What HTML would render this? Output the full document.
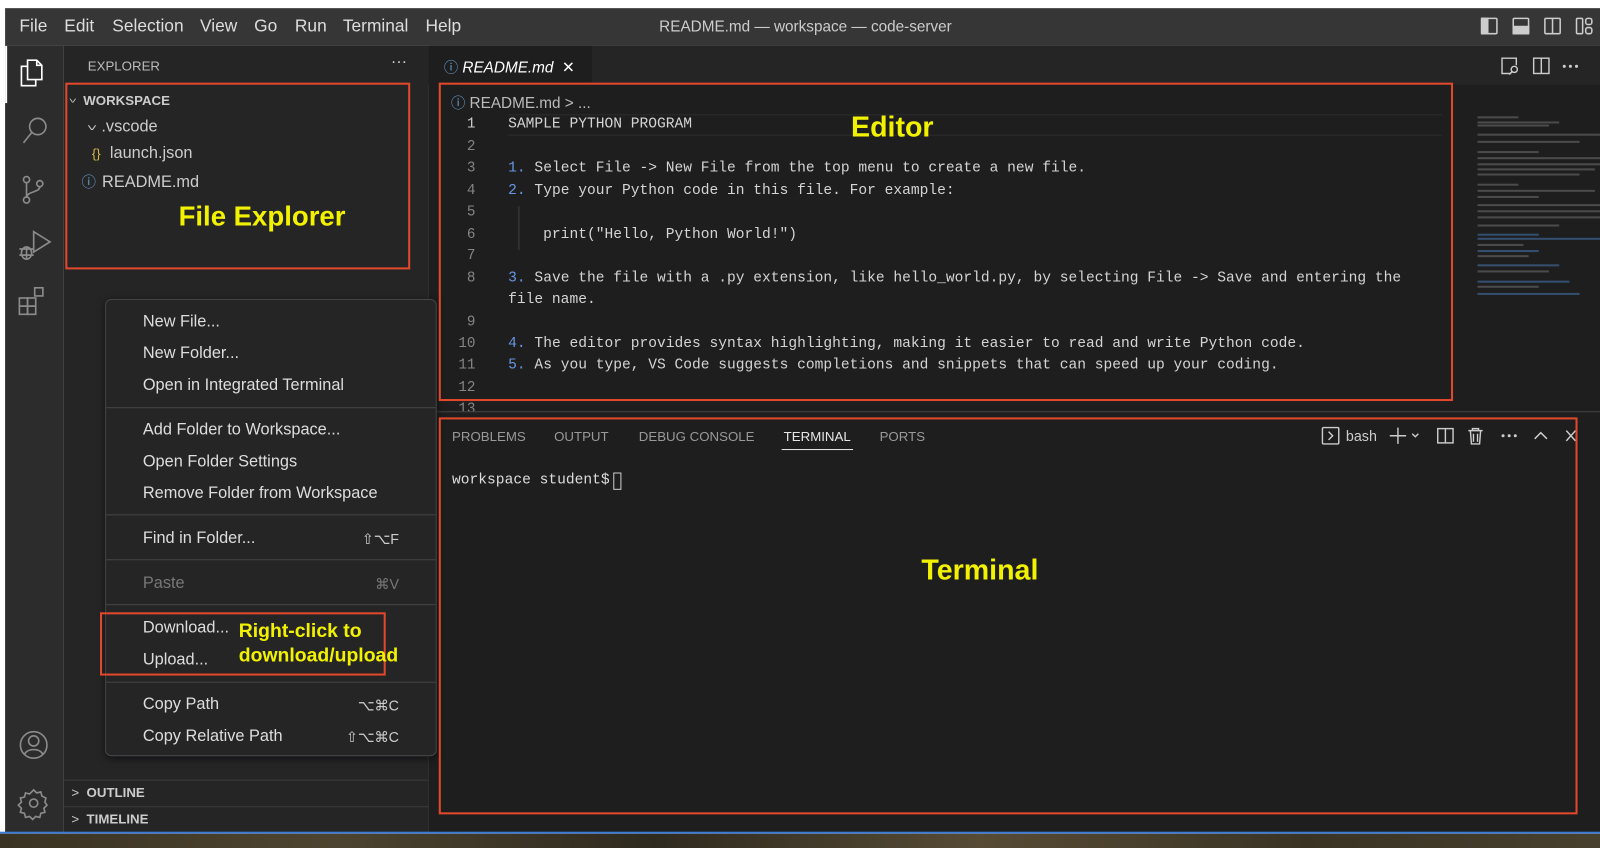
<!DOCTYPE html>
<html><head><meta charset="utf-8"><style>
*{box-sizing:border-box;margin:0;padding:0}
body{width:1600px;height:847px;background:#fff;position:relative;overflow:hidden;font-family:"Liberation Sans",sans-serif;color:#ccc}
#w{position:absolute;left:0;top:0;width:1568px;height:830px;transform:scale(1.0204,1.0205);transform-origin:0 0}
.a{position:absolute}
.mono{font-family:"Liberation Mono",monospace}
.rb{position:absolute;border:2px solid #e2482b}
.y{position:absolute;color:#f2f200;font-weight:bold;font-family:"Liberation Sans",sans-serif}
.mi{position:absolute;left:36px;font-size:16px;color:#ddd}
.sc{position:absolute;right:36px;font-size:14px;color:#ccc}
.sep{position:absolute;left:0;right:0;height:1px;background:#454545}
.ln{position:absolute;width:46px;text-align:right;left:420px;font-size:14px;color:#858585}
.cl{position:absolute;left:498px;font-size:14.3px;color:#d4d4d4;white-space:pre}
.n{color:#6796e6}
.mm{position:absolute;height:2px;background:#777;opacity:.5}
.mn{position:absolute;top:16px;font-size:17px;color:#ddd}
.pt{position:absolute;top:420px;font-size:13px;color:#999}
</style></head><body><div id="w">
<div class="a" style="left:5px;top:8px;width:1595px;height:37px;background:#363636"></div>
<div class="mn" style="left:19px">File</div><div class="mn" style="left:63px">Edit</div><div class="mn" style="left:110px">Selection</div><div class="mn" style="left:196px">View</div><div class="mn" style="left:249px">Go</div><div class="mn" style="left:289px">Run</div><div class="mn" style="left:336px">Terminal</div><div class="mn" style="left:417px">Help</div>
<div class="a" style="left:646px;top:18px;font-size:15px;color:#ccc">README.md — workspace — code-server</div>
<svg class="a" style="left:1450px;top:16px" width="120" height="22" fill="none" stroke="#ccc" stroke-width="1.5">
<rect x="2" y="2" width="15" height="15" rx="1"/><rect x="2" y="2" width="6" height="15" fill="#ccc"/>
<rect x="33" y="2" width="15" height="15" rx="1"/><rect x="33" y="10" width="15" height="7" fill="#ccc"/>
<rect x="64" y="2" width="15" height="15" rx="1"/><line x1="71.5" y1="2" x2="71.5" y2="17"/>
<rect x="95" y="2" width="6" height="15" rx="1"/><rect x="104" y="2" width="6" height="6" rx="2"/><rect x="104" y="11" width="6" height="6" rx="2"/>
</svg>
<div class="a" style="left:5px;top:45px;width:57px;height:771px;background:#2c2c2c"></div>
<div class="a" style="left:5px;top:45px;width:2px;height:56px;background:#fff"></div>
<svg class="a" style="left:15px;top:52px" width="40" height="290" fill="none" stroke="#8b8b8b" stroke-width="1.6">
<g stroke="#fff"><path d="M12 7h9l5 5v14H12z"/><path d="M21 7v5h5"/><path d="M12 13H6v19h14v-6"/></g>
<circle cx="22" cy="72" r="8"/><line x1="16" y1="78" x2="8" y2="88"/>
<circle cx="11" cy="124" r="3"/><circle cx="24" cy="128" r="3"/><circle cx="11" cy="144" r="3"/><path d="M11 127v14M24 131c0 6-13 4-13 11"/>
<path d="M18 175l16 10-16 10z"/><ellipse cx="11" cy="196" rx="5" ry="6"/><path d="M4 192h14M4 198h14M11 190v12"/>
<rect x="4" y="240" width="8" height="8"/><rect x="12" y="240" width="8" height="8"/><rect x="4" y="248" width="8" height="8"/><rect x="12" y="248" width="8" height="8"/><rect x="19" y="230" width="8" height="8"/>
</svg>
<svg class="a" style="left:15px;top:712px" width="40" height="100" fill="none" stroke="#8b8b8b" stroke-width="1.6">
<circle cx="18" cy="18" r="13"/><circle cx="18" cy="14" r="5"/><path d="M9 27c3-6 15-6 18 0"/>
<circle cx="18" cy="75" r="4"/><path d="M18 62l3 3 4-1 1 4 4 2-1 4 2 3-3 3 1 4-4 1-1 4-4-1-3 3-3-3-4 1-1-4-4-1 1-4-3-3 3-3-1-4 4-1 1-4 4 1z"/>
</svg>
<div class="a" style="left:62px;top:45px;width:358px;height:771px;background:#252526"></div>
<div class="a" style="left:86px;top:57px;font-size:13px;color:#bbb">EXPLORER</div>
<div class="a" style="left:383px;top:52px;font-size:16px;color:#ccc">···</div>
<div class="a" style="left:68px;top:91px;font-size:13px;color:#ccc"><span style="display:inline-block;transform:scaleY(.6) rotate(90deg);margin-right:6px">&gt;</span><b>WORKSPACE</b></div>
<div class="a" style="left:84px;top:116px;font-size:16px;color:#ccc"><span style="display:inline-block;transform:scaleY(.6) rotate(90deg);margin-right:6px">&gt;</span>.vscode</div>
<div class="a" style="left:90px;top:142px;font-size:16px;color:#ccc"><span style="color:#d7ba3d;font-size:13px;margin-right:9px">{}</span>launch.json</div>
<div class="a" style="left:80px;top:168px;font-size:16px;color:#ccc"><span style="color:#6aa0d6;font-size:14px;margin-right:6px">ⓘ</span>README.md</div>
<div class="a" style="left:62px;width:358px;top:764px;height:1px;background:#3a3a3a"></div>
<div class="a" style="left:62px;width:358px;top:790px;height:1px;background:#3a3a3a"></div>
<div class="a" style="left:70px;top:769px;font-size:13px;color:#ccc">&gt;&nbsp; <b>OUTLINE</b></div>
<div class="a" style="left:70px;top:795px;font-size:13px;color:#ccc">&gt;&nbsp; <b>TIMELINE</b></div>
<div class="a" style="left:420px;top:45px;width:1180px;height:771px;background:#1e1e1e"></div>
<div class="a" style="left:420px;top:45px;width:1180px;height:38px;background:#252526"></div>
<div class="a" style="left:420px;top:45px;width:160px;height:38px;background:#1e1e1e"></div>
<div class="a" style="left:435px;top:56px;font-size:15px;color:#fff"><span style="color:#6aa0d6;font-size:14px">ⓘ</span> <i>README.md</i> &nbsp;✕</div>
<svg class="a" style="left:1470px;top:55px" width="80" height="20" fill="none" stroke="#ccc" stroke-width="1.4">
<path d="M10 2H2v15h9M10 2h6v7"/><circle cx="14" cy="13" r="3"/><path d="M12 15l-3 3"/>
<rect x="33" y="2" width="15" height="15"/><line x1="40.5" y1="2" x2="40.5" y2="17"/>
<circle cx="63" cy="10" r=".8" fill="#ccc"/><circle cx="69" cy="10" r=".8" fill="#ccc"/><circle cx="75" cy="10" r=".8" fill="#ccc"/>
</svg>
<div class="a" style="left:442px;top:91px;font-size:15px;color:#bbb"><span style="color:#6aa0d6;font-size:14px">ⓘ</span> README.md &gt; ...</div>
<div class="a" style="left:498px;top:112px;width:915px;height:21px;border-top:1px solid #2d2d2d;border-bottom:1px solid #2d2d2d"></div>
<div class="a" style="left:508px;top:202px;width:1px;height:43px;background:#404040"></div>
<div class="mono">
<div class="ln" style="top:114px;color:#ccc">1</div><div class="ln" style="top:136px">2</div><div class="ln" style="top:157px">3</div><div class="ln" style="top:179px">4</div><div class="ln" style="top:200px">5</div><div class="ln" style="top:222px">6</div><div class="ln" style="top:243px">7</div><div class="ln" style="top:265px">8</div><div class="ln" style="top:308px">9</div><div class="ln" style="top:329px">10</div><div class="ln" style="top:350px">11</div><div class="ln" style="top:372px">12</div><div class="ln" style="top:393px;height:10px;overflow:hidden">13</div>
<div class="cl" style="top:114px">SAMPLE PYTHON PROGRAM</div>
<div class="cl" style="top:157px"><span class="n">1.</span> Select File -&gt; New File from the top menu to create a new file.</div>
<div class="cl" style="top:179px"><span class="n">2.</span> Type your Python code in this file. For example:</div>
<div class="cl" style="top:222px">    print("Hello, Python World!")</div>
<div class="cl" style="top:265px"><span class="n">3.</span> Save the file with a .py extension, like hello_world.py, by selecting File -&gt; Save and entering the</div>
<div class="cl" style="top:286px">file name.</div>
<div class="cl" style="top:329px"><span class="n">4.</span> The editor provides syntax highlighting, making it easier to read and write Python code.</div>
<div class="cl" style="top:350px"><span class="n">5.</span> As you type, VS Code suggests completions and snippets that can speed up your coding.</div>
</div>
<div class="mm" style="left:1448px;top:114px;width:40px"></div>
<div class="mm" style="left:1448px;top:119px;width:80px"></div>
<div class="mm" style="left:1448px;top:122px;width:70px"></div>
<div class="mm" style="left:1448px;top:131px;width:120px"></div>
<div class="mm" style="left:1448px;top:138px;width:100px"></div>
<div class="mm" style="left:1448px;top:148px;width:60px"></div>
<div class="mm" style="left:1448px;top:154px;width:125px"></div>
<div class="mm" style="left:1448px;top:160px;width:125px"></div>
<div class="mm" style="left:1448px;top:165px;width:115px"></div>
<div class="mm" style="left:1448px;top:170px;width:100px"></div>
<div class="mm" style="left:1448px;top:180px;width:40px"></div>
<div class="mm" style="left:1448px;top:186px;width:115px"></div>
<div class="mm" style="left:1448px;top:192px;width:60px"></div>
<div class="mm" style="left:1448px;top:200px;width:125px"></div>
<div class="mm" style="left:1448px;top:206px;width:125px"></div>
<div class="mm" style="left:1448px;top:212px;width:125px"></div>
<div class="mm" style="left:1448px;top:220px;width:80px"></div>
<div class="mm" style="left:1448px;top:229px;width:60px;background:#4a7fc0"></div>
<div class="mm" style="left:1448px;top:233px;width:125px;background:#4a7fc0"></div>
<div class="mm" style="left:1448px;top:239px;width:45px"></div>
<div class="mm" style="left:1448px;top:245px;width:60px;background:#4a7fc0"></div>
<div class="mm" style="left:1448px;top:250px;width:50px"></div>
<div class="mm" style="left:1448px;top:259px;width:80px;background:#4a7fc0"></div>
<div class="mm" style="left:1448px;top:265px;width:70px"></div>
<div class="mm" style="left:1448px;top:275px;width:90px;background:#4a7fc0"></div>
<div class="mm" style="left:1448px;top:280px;width:60px"></div>
<div class="mm" style="left:1448px;top:287px;width:100px;background:#4a7fc0"></div>
<div class="a" style="left:1583px;top:114px;width:1px;height:300px;background:#333"></div>
<div class="a" style="left:420px;top:403px;width:1180px;height:1px;background:#444"></div>
<div class="pt" style="left:443px">PROBLEMS</div>
<div class="pt" style="left:543px">OUTPUT</div>
<div class="pt" style="left:626px">DEBUG CONSOLE</div>
<div class="pt" style="left:768px;color:#e7e7e7">TERMINAL</div>
<div class="a" style="left:766px;top:440px;width:70px;height:1px;background:#e7e7e7"></div>
<div class="pt" style="left:862px">PORTS</div>
<svg class="a" style="left:1295px;top:417px" width="260" height="20" fill="none" stroke="#ccc" stroke-width="1.4">
<rect x="1" y="2" width="16" height="16" rx="1"/><path d="M7 6l4 4-4 4"/>
<path d="M75 2v16M67 10h16M89 8l3 3 3-3"/>
<rect x="114" y="3" width="15" height="14"/><line x1="121.5" y1="3" x2="121.5" y2="17"/>
<path d="M144 5h14M148 5V3h6v2M146 5l1 13h8l1-13M149 8v8M153 8v8"/>
<circle cx="178" cy="10" r=".8" fill="#ccc"/><circle cx="184" cy="10" r=".8" fill="#ccc"/><circle cx="190" cy="10" r=".8" fill="#ccc"/>
<path d="M209 13l6-6 6 6M240 5l9 10M249 5l-9 10"/>
</svg>
<div class="a" style="left:1319px;top:419px;font-size:14px;color:#ccc">bash</div>
<div class="a mono" style="left:443px;top:463px;font-size:14.3px;color:#ddd">workspace student$ </div>
<div class="a" style="left:601px;top:463px;width:8px;height:17px;border:1px solid #ccc"></div>
<div class="a" style="left:0;top:815px;width:1600px;height:2px;background:#3a7bd5"></div>
<div class="a" style="left:0;top:817px;width:1600px;height:14px;background:linear-gradient(90deg,#3a3222,#4d4430 20%,#2f2a1f 40%,#564b35 60%,#3a3324 80%,#4a422f)"></div>
<div class="a" style="left:103px;top:293px;width:325px;height:448px;background:#252526;border:1px solid #454545;border-radius:6px;box-shadow:0 2px 8px #0008">
<div class="mi" style="top:13px">New File...</div>
<div class="mi" style="top:44px">New Folder...</div>
<div class="mi" style="top:75px">Open in Integrated Terminal</div>
<div class="sep" style="top:105px"></div>
<div class="mi" style="top:119px">Add Folder to Workspace...</div>
<div class="mi" style="top:150px">Open Folder Settings</div>
<div class="mi" style="top:181px">Remove Folder from Workspace</div>
<div class="sep" style="top:210px"></div>
<div class="mi" style="top:225px">Find in Folder...</div><div class="sc" style="top:226px">⇧⌥F</div>
<div class="sep" style="top:254px"></div>
<div class="mi" style="top:269px;color:#777">Paste</div><div class="sc" style="top:270px;color:#777">⌘V</div>
<div class="sep" style="top:298px"></div>
<div class="mi" style="top:313px">Download...</div>
<div class="mi" style="top:344px">Upload...</div>
<div class="sep" style="top:374px"></div>
<div class="mi" style="top:388px">Copy Path</div><div class="sc" style="top:389px">⌥⌘C</div>
<div class="mi" style="top:419px">Copy Relative Path</div><div class="sc" style="top:420px">⇧⌥⌘C</div>
</div>
<div class="rb" style="left:64px;top:81px;width:338px;height:183px"></div>
<div class="rb" style="left:430px;top:81px;width:994px;height:312px"></div>
<div class="rb" style="left:430px;top:409px;width:1116px;height:389px"></div>
<div class="rb" style="left:98px;top:600px;width:280px;height:62px"></div>
<div class="y" style="left:175px;top:197px;font-size:27px">File Explorer</div>
<div class="y" style="left:834px;top:109px;font-size:28px">Editor</div>
<div class="y" style="left:903px;top:543px;font-size:28px">Terminal</div>
<div class="y" style="left:234px;top:607px;font-size:19px;line-height:24px">Right-click to<br>download/upload</div>
</div></body></html>
